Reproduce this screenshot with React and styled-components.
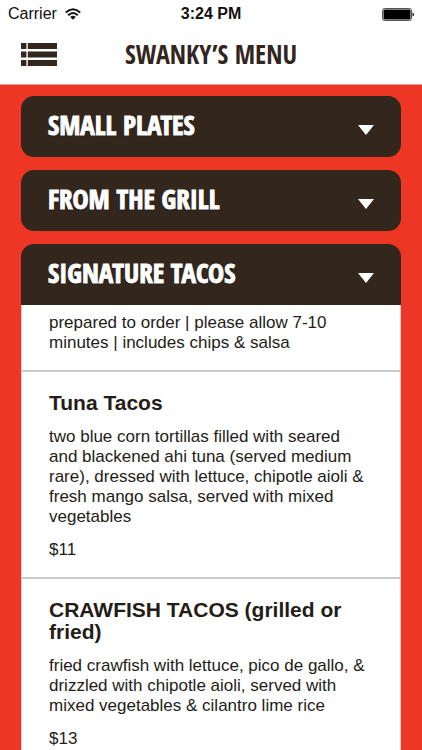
import React, { useState } from "react";
import styled, { createGlobalStyle } from "styled-components";

const GlobalStyle = createGlobalStyle`
  *, *::before, *::after { box-sizing: border-box; }
  body {
    margin: 0;
    background: #ee3625;
    color: #231c17;
    font-family: "Liberation Sans", Arial, sans-serif;
  }
`;

const Screen = styled.div`
  display: flex;
  flex-direction: column;
  height: 100vh;
  overflow: hidden;
`;

const StatusBar = styled.div`
  display: grid;
  grid-template-columns: 1fr auto 1fr;
  align-items: center;
  flex: none;
  height: 28px;
  padding: 0 8px;
  background: #fff;
  color: #111;
  font-size: 16px;
  line-height: 28px;
`;

const Carrier = styled.span`
  display: flex;
  align-items: center;
  gap: 8px;
`;

const Clock = styled.time`
  font-weight: 700;
`;

const BatteryIcon = styled.svg`
  justify-self: end;
`;

const Header = styled.header`
  display: grid;
  grid-template-columns: 40px 1fr 40px;
  align-items: center;
  flex: none;
  height: 57px;
  padding: 0 20px 4px;
  background: #fff;
  border-bottom: 1px solid #e7a197;
`;

const MenuButton = styled.button`
  display: flex;
  padding: 0 1px;
  border: 0;
  background: none;
  cursor: pointer;
`;

const Title = styled.h1`
  margin: 0;
  color: #32261e;
  font-family: "Open Sans Condensed", "Liberation Sans Narrow", "Liberation Sans", sans-serif;
  font-size: 26px;
  font-weight: 700;
  line-height: 32px;
  text-align: center;
  white-space: nowrap;
`;

const Sections = styled.main`
  display: flex;
  flex-direction: column;
  flex: 1;
  gap: 13px;
  min-height: 0;
  padding: 11px 21px 0;
  overflow-y: auto;
  scrollbar-width: none;
`;

const SectionHeading = styled.h2`
  margin: 0;
`;

const SectionButton = styled.button`
  display: flex;
  align-items: center;
  justify-content: space-between;
  width: 100%;
  height: 61px;
  padding: 0 27px 4px;
  border: 0;
  border-radius: ${({ $open }) => ($open ? "13px 13px 0 0" : "13px")};
  background: #32261d;
  color: #fff;
  font-family: "Open Sans Condensed", "Liberation Sans Narrow", "Liberation Sans", sans-serif;
  font-size: 27px;
  font-weight: 700;
  line-height: 32px;
  text-align: left;
  text-shadow: 0 1px 1px #000;
  -webkit-text-stroke: 1px #fff;
  cursor: pointer;
`;

const Arrow = styled.svg`
  flex: none;
  margin-top: 10px;
`;

const Dishes = styled.div`
  background: #fff;
  border: solid #d3cfcd;
  border-width: 0 1px;
`;

const Note = styled.p`
  margin: 0;
  padding: 8px 30px 17px 27px;
  font-size: 17px;
  line-height: 20px;
`;

const Dish = styled.article`
  display: flex;
  flex-direction: column;
  gap: 13px;
  padding: 20px 30px 17px 27px;
  border-top: 2px solid #cbcbcb;
`;

const DishName = styled.h3`
  margin: 0;
  font-size: 21px;
  font-weight: 700;
  line-height: 22px;
`;

const DishText = styled.p`
  margin: 0;
  font-size: 17px;
  line-height: 20px;
`;

const tacos = [
  {
    name: "Tuna Tacos",
    text: "two blue corn tortillas filled with seared and blackened ahi tuna (served medium rare), dressed with lettuce, chipotle aioli & fresh mango salsa, served with mixed vegetables",
    price: "$11",
  },
  {
    name: "CRAWFISH TACOS (grilled or fried)",
    text: "fried crawfish with lettuce, pico de gallo, & drizzled with chipotle aioli, served with mixed vegetables & cilantro lime rice",
    price: "$13",
  },
];

const sections = [
  { name: "SMALL PLATES", dishes: [] },
  { name: "FROM THE GRILL", dishes: [] },
  {
    name: "SIGNATURE TACOS",
    note: "prepared to order | please allow 7-10 minutes | includes chips & salsa",
    dishes: tacos,
  },
];

function Section({ section, open, onToggle }) {
  return (
    <section>
      <SectionHeading>
        <SectionButton type="button" $open={open} aria-expanded={open} onClick={onToggle}>
          {section.name}
          <Arrow width="16" height="10" viewBox="0 0 16 10" aria-hidden="true">
            <path d="M0 0H16L8 10Z" fill="#fff" />
          </Arrow>
        </SectionButton>
      </SectionHeading>
      {open && section.dishes.length > 0 && (
        <Dishes>
          <Note>{section.note}</Note>
          {section.dishes.map((dish) => (
            <Dish key={dish.name}>
              <DishName>{dish.name}</DishName>
              <DishText>{dish.text}</DishText>
              <DishText>{dish.price}</DishText>
            </Dish>
          ))}
        </Dishes>
      )}
    </section>
  );
}

export default function App() {
  const [openName, setOpenName] = useState("SIGNATURE TACOS");
  return (
    <Screen>
      <GlobalStyle />
      <StatusBar>
        <Carrier>
          Carrier
          <svg width="16" height="13" viewBox="0 0 16 13" aria-hidden="true">
            <path d="M0.8 4.6Q8-2.2 15.2 4.6M3.2 7.2Q8 2.8 12.8 7.2" fill="none" stroke="#111" strokeWidth="2" />
            <path d="M5.2 9Q8 6.6 10.8 9L8 11.8Z" fill="#111" />
          </svg>
        </Carrier>
        <Clock>3:24 PM</Clock>
        <BatteryIcon width="32" height="13" viewBox="0 0 32 13" aria-hidden="true">
          <rect x="0.5" y="0.5" width="29" height="12" rx="2" fill="#fff" stroke="#555" />
          <rect x="1.5" y="1.5" width="27" height="10" rx="1" fill="#000" />
          <path d="M30.5 4.5Q32 5 32 6.5T30.5 8.5Z" fill="#111" />
        </BatteryIcon>
      </StatusBar>
      <Header>
        <MenuButton type="button" aria-label="Open navigation">
          <svg width="36" height="23" viewBox="0 0 36 23" fill="#32261e" aria-hidden="true">
            <path d="M0 0H5.4V6H0ZM6.8 0H36V6H6.8ZM0 8.5H5.4V14.5H0ZM6.8 8.5H36V14.5H6.8ZM0 17H5.4V23H0ZM6.8 17H36V23H6.8Z" />
          </svg>
        </MenuButton>
        <Title>SWANKY’S MENU</Title>
      </Header>
      <Sections>
        {sections.map((section) => (
          <Section
            key={section.name}
            section={section}
            open={openName === section.name}
            onToggle={() => setOpenName(openName === section.name ? "" : section.name)}
          />
        ))}
      </Sections>
    </Screen>
  );
}
